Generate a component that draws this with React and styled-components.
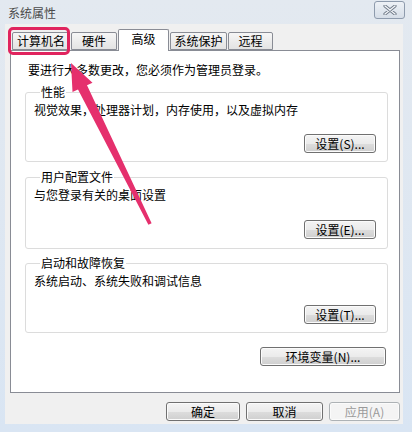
import React from "react";
import styled, { createGlobalStyle } from "styled-components";

const GlobalStyle = createGlobalStyle`
  html, body {
    margin: 0;
    padding: 0;
    background: #dae5f2;
  }
  body {
    font-family: "Noto Sans CJK SC", "Noto Sans", sans-serif;
    font-size: 12px;
    color: #000;
  }
`;

const Window = styled.div`
  position: relative;
  width: 412px;
  height: 432px;
  display: flex;
  flex-direction: column;
  background: linear-gradient(#e3e9f0, #d9e5f3);
  overflow: hidden;
`;

const TitleBar = styled.div`
  height: 24px;
  display: flex;
  align-items: center;
  justify-content: space-between;
  padding: 0 7px 0 8px;
`;

const Title = styled.span`
  font-size: 12px;
  color: #4a4a4a;
  line-height: 1;
  margin-top: 2px;
`;

const CloseButton = styled.div`
  width: 29px;
  height: 16px;
  margin-top: -4px;
  border: 1px solid #8e9bad;
  border-radius: 3px;
  background: linear-gradient(#edf1f6, #d6dee8);
  display: flex;
  align-items: center;
  justify-content: center;
`;

const Client = styled.div`
  position: relative;
  margin: 0 9px 0 5px;
  height: 400px;
  background: #f0f0f0;
  display: flex;
  flex-direction: column;
  padding: 5px 3px 0 5px;
  box-sizing: border-box;
`;

const TabRow = styled.div`
  position: relative;
  height: 21px;
  display: flex;
  align-items: flex-end;
  padding-left: 2px;
  gap: 1px;
  z-index: 1;
`;

const Tab = styled.div`
  width: ${(p) => p.$w}px;
  height: ${(p) => (p.$active ? 22 : 18)}px;
  margin-bottom: ${(p) => (p.$active ? -1 : 0)}px;
  box-sizing: border-box;
  border: 1px solid #898c95;
  border-bottom: ${(p) => (p.$active ? "none" : "1px solid #898c95")};
  border-radius: 2px 2px 0 0;
  background: ${(p) =>
    p.$active ? "#ffffff" : "linear-gradient(#f6f6f6, #e3e3e3)"};
  display: flex;
  align-items: ${(p) => (p.$active ? "flex-start" : "center")};
  padding-top: ${(p) => (p.$active ? 3 : 0)}px;
  justify-content: center;
  font-size: 12px;
  line-height: 1;
`;

const Highlight = styled.div`
  position: absolute;
  left: -2px;
  top: -2px;
  width: 62px;
  height: 28px;
  box-sizing: border-box;
  border: 3px solid #e0245e;
  border-radius: 5px;
`;

const Panel = styled.div`
  width: 390px;
  height: 343px;
  box-sizing: border-box;
  border: 1px solid #898c95;
  background: #ffffff;
  padding: 12px 11px 0 14px;
  display: flex;
  flex-direction: column;
`;

const Notice = styled.div`
  padding-left: 3px;
  line-height: 14px;
  margin-bottom: 8px;
`;

const Group = styled.fieldset`
  margin: 0 0 ${(p) => p.$gap}px 0;
  padding: 0 11px 0 8px;
  height: ${(p) => p.$h}px;
  box-sizing: border-box;
  border: 1px solid #dcdcdc;
  border-radius: 3px;
`;

const Legend = styled.legend`
  padding: 0 1px;
  margin-left: 6px;
  font-size: 12px;
  line-height: 14px;
`;

const Desc = styled.div`
  line-height: 14px;
  height: 14px;
  margin: 4px 0 ${(p) => p.$space}px 0;
`;

const ButtonRow = styled.div`
  display: flex;
  justify-content: flex-end;
  padding-right: ${(p) => p.$pr || 0}px;
`;

const Button = styled.div`
  width: ${(p) => p.$w}px;
  height: 19px;
  box-sizing: border-box;
  border: 1px solid #707070;
  border-radius: 3px;
  background: linear-gradient(#f4f4f4 0%, #ebebeb 50%, #dddddd 51%, #cfcfcf 100%);
  box-shadow: inset 0 0 0 1px #fbfbfb;
  display: flex;
  align-items: center;
  justify-content: center;
  font-size: 12px;
  line-height: 1;
  color: ${(p) => (p.$disabled ? "#9a9a9a" : "#000")};
  border-color: ${(p) => (p.$disabled ? "#adb2b5" : "#707070")};
  ${(p) => p.$disabled && "background: #f4f4f4;"}
`;

const Footer = styled.div`
  margin-top: 9px;
  display: flex;
  justify-content: flex-end;
  gap: 6px;
`;

const Overlay = styled.svg`
  position: absolute;
  left: 0;
  top: 0;
  pointer-events: none;
`;

const groups = [
  { title: "性能", desc: "视觉效果，处理器计划，内存使用，以及虚拟内存", btn: "设置(S)...", h: 77, gap: 8, space: 17 },
  { title: "用户配置文件", desc: "与您登录有关的桌面设置", btn: "设置(E)...", h: 79, gap: 7, space: 18 },
  { title: "启动和故障恢复", desc: "系统启动、系统失败和调试信息", btn: "设置(T)...", h: 77, gap: 14, space: 17 },
];

const tabs = [
  { label: "计算机名", w: 58 },
  { label: "硬件", w: 46 },
  { label: "高级", w: 51, active: true },
  { label: "系统保护", w: 57 },
  { label: "远程", w: 45 },
];

export default function App() {
  return (
    <>
      <GlobalStyle />
      <Window>
        <TitleBar>
          <Title>系统属性</Title>
          <CloseButton>
            <svg width="14" height="10" viewBox="0 0 14 10">
              <path d="M2 1 L12 9 M12 1 L2 9" stroke="#6f7a88" strokeWidth="3.2" strokeLinecap="round" />
              <path d="M2 1 L12 9 M12 1 L2 9" stroke="#f4f6f9" strokeWidth="1.4" strokeLinecap="round" />
            </svg>
          </CloseButton>
        </TitleBar>
        <Client>
          <TabRow>
            {tabs.map((t) => (
              <Tab key={t.label} $w={t.w} $active={t.active}>
                {t.label}
              </Tab>
            ))}
            <Highlight />
          </TabRow>
          <Panel>
            <Notice>要进行大多数更改，您必须作为管理员登录。</Notice>
            {groups.map((g) => (
              <Group key={g.title} $h={g.h} $gap={g.gap}>
                <Legend>{g.title}</Legend>
                <Desc $space={g.space}>{g.desc}</Desc>
                <ButtonRow>
                  <Button $w={72}>{g.btn}</Button>
                </ButtonRow>
              </Group>
            ))}
            <ButtonRow $pr={2}>
              <Button $w={126}>环境变量(N)...</Button>
            </ButtonRow>
          </Panel>
          <Footer>
            <Button $w={74}>确定</Button>
            <Button $w={77}>取消</Button>
            <Button $w={71} $disabled>应用(A)</Button>
          </Footer>
        </Client>
        <Overlay width="412" height="432" viewBox="0 0 412 432">
          <polygon
            points="71,63 92.5,82.7 87,85.3 151.6,223.2 148.4,224.8 78,89.5 72.5,92.1"
            fill="#e5306d"
          />
        </Overlay>
      </Window>
    </>
  );
}
